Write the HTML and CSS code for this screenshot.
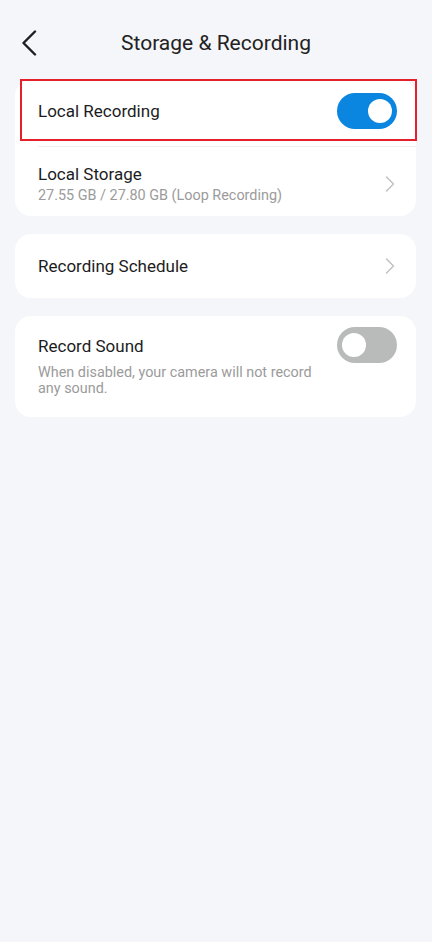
FILE: index.html
```html
<!DOCTYPE html>
<html lang="en">
<head>
    <meta charset="UTF-8">
    <meta name="viewport" content="width=device-width, initial-scale=1.0">
    <title>Storage &amp; Recording</title>
    <link rel="stylesheet" href="styles.css">
</head>
<body>
    <div class="header">
        <button class="back" aria-label="Back">
            <svg width="16" height="26" viewBox="0 0 16 26">
                <path d="M14 1.5 L2.5 13 L14 24.5" fill="none" stroke="#1f1f1f" stroke-width="2.4" stroke-linecap="round" stroke-linejoin="round"/>
            </svg>
        </button>
        <h1 class="title">Storage &amp; Recording</h1>
    </div>

    <div class="content">
        <div class="card">
            <div class="row row-switch">
                <span class="label">Local Recording</span>
                <div class="toggle on"><span class="knob"></span></div>
            </div>
            <div class="divider"></div>
            <div class="row row-storage">
                <div class="text">
                    <div class="label">Local Storage</div>
                    <div class="sub">27.55 GB / 27.80 GB (Loop Recording)</div>
                </div>
                <svg class="chevron" width="10" height="16" viewBox="0 0 10 16">
                    <path d="M1.5 1 L8.5 8 L1.5 15" fill="none" stroke="#c2c2c2" stroke-width="1.5" stroke-linecap="round" stroke-linejoin="round"/>
                </svg>
            </div>
            <div class="highlight"></div>
        </div>

        <div class="card">
            <div class="row row-single">
                <span class="label">Recording Schedule</span>
                <svg class="chevron" width="10" height="16" viewBox="0 0 10 16">
                    <path d="M1.5 1 L8.5 8 L1.5 15" fill="none" stroke="#c2c2c2" stroke-width="1.5" stroke-linecap="round" stroke-linejoin="round"/>
                </svg>
            </div>
        </div>

        <div class="card">
            <div class="row row-sound">
                <div class="text">
                    <div class="label">Record Sound</div>
                    <div class="sub sub-wrap">When disabled, your camera will not record any sound.</div>
                </div>
                <div class="toggle"><span class="knob"></span></div>
            </div>
        </div>
    </div>
</body>
</html>
```

FILE: styles.css
```css
* {
    box-sizing: border-box;
    margin: 0;
    padding: 0;
}

body {
    font-family: Roboto, "Noto Sans", sans-serif;
    background: #f5f6fa;
    color: #1c1c1e;
    width: 432px;
    min-height: 942px;
}

.header {
    position: relative;
    height: 80px;
    padding-top: 6px;
    display: flex;
    align-items: center;
    justify-content: center;
}

.back {
    position: absolute;
    left: 21px;
    top: 30px;
    border: none;
    background: none;
    display: flex;
}

.title {
    font-size: 21px;
    font-weight: 400;
    color: #222;
}

.content {
    padding: 0 16px 0 15px;
    display: flex;
    flex-direction: column;
    gap: 18px;
}

.card {
    position: relative;
    background: #fff;
    border-radius: 16px;
}

.row {
    display: flex;
    align-items: center;
    justify-content: space-between;
    padding: 0 19px 0 23px;
}

.label {
    font-size: 17px;
    line-height: 22px;
    color: #1c1c1e;
}

.sub {
    font-size: 14.4px;
    line-height: 18px;
    color: #9b9b9b;
}

.row-switch {
    height: 62px;
}

.divider {
    margin: 4px 0 0 23px;
    height: 1px;
    background: #efeff2;
}

.row-storage {
    padding: 16px 21px 11px 23px;
}

.row-storage .sub {
    margin-top: 2px;
}

.row-single {
    height: 64px;
    padding-right: 21px;
}

.row-sound {
    align-items: flex-start;
    padding: 18px 19px 20px 23px;
}

.row-sound .label {
    line-height: 24px;
}

.sub-wrap {
    width: 290px;
    margin-top: 7px;
    line-height: 16px;
}

.toggle {
    width: 60px;
    height: 36px;
    border-radius: 18px;
    background: #b9bbbb;
    display: flex;
    align-items: center;
    padding: 0 5px;
    flex-shrink: 0;
}

.row-sound .toggle {
    margin-top: -7px;
}

.toggle.on {
    background: #0a85e0;
    justify-content: flex-end;
}

.knob {
    width: 24px;
    height: 24px;
    border-radius: 50%;
    background: #fff;
}

.highlight {
    position: absolute;
    left: 5px;
    top: -1px;
    width: 397px;
    height: 62px;
    border: 2px solid #e5202a;
}
```
